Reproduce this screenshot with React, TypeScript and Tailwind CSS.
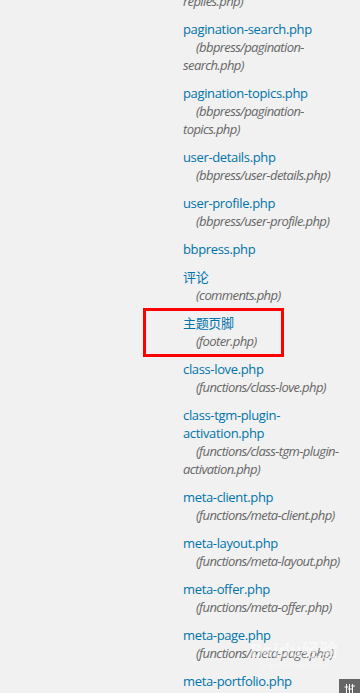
const FILES = [
  { name: 'pagination-replies.php', path: '(bbpress/pagination-replies.php)' },
  { name: 'pagination-search.php', path: '(bbpress/pagination-search.php)' },
  { name: 'pagination-topics.php', path: '(bbpress/pagination-topics.php)' },
  { name: 'user-details.php', path: '(bbpress/user-details.php)' },
  { name: 'user-profile.php', path: '(bbpress/user-profile.php)' },
  { name: 'bbpress.php' },
  { name: '评论', path: '(comments.php)' },
  { name: '主题页脚', path: '(footer.php)' },
  { name: 'class-love.php', path: '(functions/class-love.php)' },
  { name: 'class-tgm-plugin-activation.php', path: '(functions/class-tgm-plugin-activation.php)' },
  { name: 'meta-client.php', path: '(functions/meta-client.php)' },
  { name: 'meta-layout.php', path: '(functions/meta-layout.php)' },
  { name: 'meta-offer.php', path: '(functions/meta-offer.php)' },
  { name: 'meta-page.php', path: '(functions/meta-page.php)' },
  { name: 'meta-portfolio.php', path: '(functions/meta-portfolio.php)' },
];

export default function App() {
  return (
    <div
      className="relative w-[360px] h-[693px] overflow-hidden bg-[#f1f1f1] text-[13px] leading-[18px] tracking-[-0.35px]"
      style={{ fontFamily: '"Open Sans", "Noto Sans CJK SC", sans-serif' }}
    >
      <ul className="ml-[183px] w-[164px] -mt-[44px] flex flex-col gap-[10px]">
        {FILES.map((f) => (
          <li key={f.name} className="break-words">
            <a className="text-[#0073aa]">
              {f.name}
              {f.path && (
                <>
                  <br />
                  <span className="pl-[13px] italic text-[#666] tracking-[-0.6px]">{f.path}</span>
                </>
              )}
            </a>
          </li>
        ))}
      </ul>

      {/* annotation box */}
      <div className="absolute left-[143px] top-[308px] w-[141px] h-[49px] border-[3px] border-[#ff0000]" />

      {/* watermark */}
      <div className="absolute left-[250px] top-[640px] flex flex-col items-center text-white/50 pointer-events-none tracking-normal">
        <span className="text-[18px] leading-[20px] font-bold">Baidu经验</span>
        <span className="text-[8px] leading-[10px]">jingyan.baidu.com</span>
      </div>

      {/* corner widget */}
      <div className="absolute right-0 bottom-0 w-[21px] h-[14px] bg-[#666] flex items-end justify-center">
        <svg width="12" height="10" viewBox="0 0 12 10" fill="none" stroke="#fff" strokeWidth="1">
          <path d="M2.5 1v9M5.5 1v9M8.5 1v9M0.5 4h4M4 6h4M7 3h4" />
        </svg>
      </div>
    </div>
  );
}
